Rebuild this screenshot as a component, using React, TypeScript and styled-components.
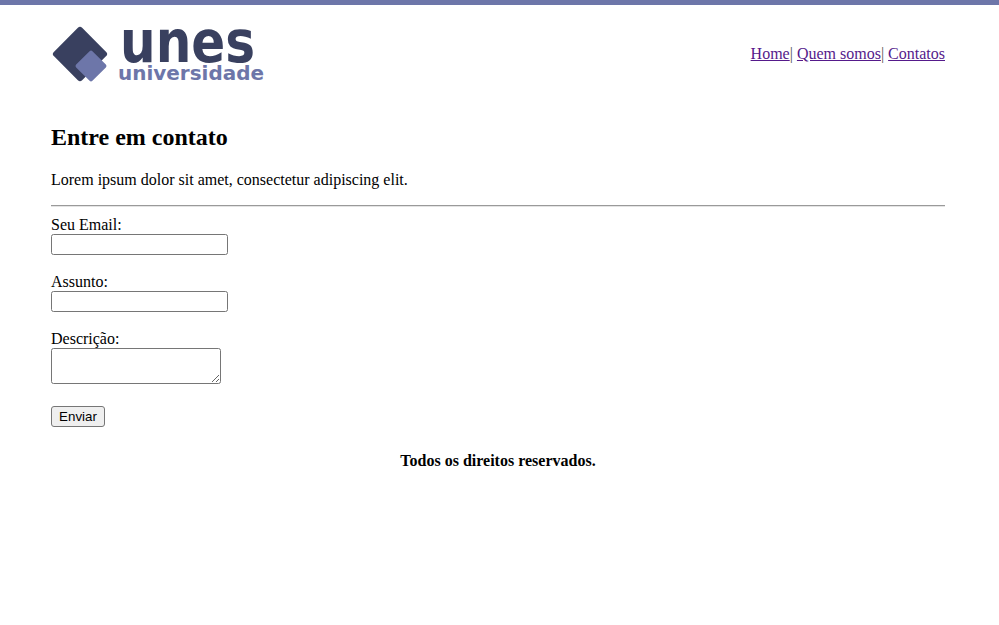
import styled, { createGlobalStyle } from 'styled-components';

const GlobalStyle = createGlobalStyle`
  html, body {
    margin: 0;
    padding: 0;
    background-color: #fff;
    color: #000;
    font-family: 'Liberation Serif', 'Times New Roman', serif;
    font-size: 16px;
  }
`;

const TopBar = styled.div`
  height: 5px;
  background-color: #6d76a9;
`;

const Page = styled.div`
  width: 894px;
  margin-left: 51px;
`;

const Header = styled.header`
  display: flex;
  align-items: center;
  justify-content: space-between;
  padding-top: 20px;
`;

const Logo = styled.svg`
  display: block;
  width: 214px;
  height: 58px;
`;

const Nav = styled.nav`
  color: #555;
`;

const NavLink = styled.a`
  color: #551a8b;
  text-decoration: underline;
`;

const Title = styled.h2`
  font-size: 24px;
  font-weight: bold;
  margin: 41px 0 0;
`;

const Intro = styled.p`
  margin: 20px 0 0;
`;

const Rule = styled.hr`
  margin: 16px 0 0;
  border: 0;
  border-top: 1px solid #9a9a9a;
  border-bottom: 1px solid #e4e4e4;
`;

const Form = styled.form`
  margin-top: 9px;
`;

const Field = styled.div`
  margin-bottom: 18px;
`;

const Label = styled.label`
  display: block;
`;

const TextInput = styled.input`
  display: block;
  box-sizing: border-box;
  width: 177px;
  height: 21px;
  margin: 0;
  padding: 1px 2px;
  border: 1px solid #767676;
  border-radius: 2.5px;
  background: #fff;
`;

const TextArea = styled.textarea`
  display: block;
  box-sizing: border-box;
  width: 170px;
  height: 36px;
  margin: 0;
  padding: 2px;
  border: 1px solid #767676;
  border-radius: 2.5px;
  background: #fff;
`;

const SubmitButton = styled.button`
  display: block;
  box-sizing: border-box;
  width: 54px;
  height: 21px;
  margin-top: 22px;
  padding: 1px 6px;
  font-family: 'Liberation Sans', Arial, sans-serif;
  font-size: 13.333px;
  color: #000;
  background-color: #efefef;
  border: 1px solid #767676;
  border-radius: 3px;
`;

const Footer = styled.footer`
  margin-top: 25px;
  text-align: center;
  font-weight: bold;
`;

const UnesLogo = () => (
  <Logo viewBox="51 25 214 58" aria-label="unes universidade">
    <rect x="60" y="34" width="40" height="40" rx="3" fill="#39405f" transform="rotate(45 80 54)" />
    <rect x="79.5" y="54.5" width="23" height="23" rx="2" fill="#6d76a9" transform="rotate(45 91 66)" />
    <text
      x="120"
      y="62"
      fontFamily="'DejaVu Sans', sans-serif"
      fontWeight="bold"
      fontSize="58"
      fill="#39405f"
      textLength="135"
      lengthAdjust="spacingAndGlyphs"
    >
      unes
    </text>
    <text
      x="118"
      y="80"
      fontFamily="'DejaVu Sans', sans-serif"
      fontWeight="bold"
      fontSize="20"
      fill="#6d76a9"
      textLength="146"
      lengthAdjust="spacingAndGlyphs"
    >
      universidade
    </text>
  </Logo>
);

export default function App() {
  return (
    <>
      <GlobalStyle />
      <TopBar />
      <Page>
        <Header>
          <UnesLogo />
          <Nav>
            <NavLink href="#">Home</NavLink>| <NavLink href="#">Quem somos</NavLink>|{' '}
            <NavLink href="#">Contatos</NavLink>
          </Nav>
        </Header>
        <Title>Entre em contato</Title>
        <Intro>Lorem ipsum dolor sit amet, consectetur adipiscing elit.</Intro>
        <Rule />
        <Form onSubmit={(e) => e.preventDefault()}>
          <Field>
            <Label htmlFor="email">Seu Email:</Label>
            <TextInput id="email" type="text" />
          </Field>
          <Field>
            <Label htmlFor="assunto">Assunto:</Label>
            <TextInput id="assunto" type="text" />
          </Field>
          <Field>
            <Label htmlFor="descricao">Descrição:</Label>
            <TextArea id="descricao" />
          </Field>
          <SubmitButton type="submit">Enviar</SubmitButton>
        </Form>
        <Footer>Todos os direitos reservados.</Footer>
      </Page>
    </>
  );
}
